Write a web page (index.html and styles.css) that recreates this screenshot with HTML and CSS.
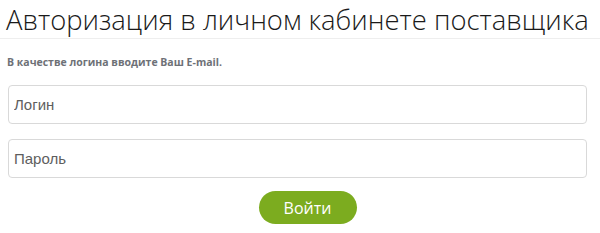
FILE: index.html
```html
<!DOCTYPE html>
<html lang="ru">
<head>
<meta charset="utf-8">
<link rel="stylesheet" href="styles.css">
</head>
<body>
<div class="page">
  <h1 class="title">Авторизация в личном кабинете поставщика</h1>
  <div class="body">
    <p class="hint">В качестве логина вводите Ваш E-mail.</p>
    <form class="form">
      <input class="field" type="text" placeholder="Логин">
      <input class="field" type="password" placeholder="Пароль">
      <div class="actions"><button class="btn" type="button">Войти</button></div>
    </form>
  </div>
</div>
</body>
</html>
```
FILE: styles.css
```css
html, body { margin: 0; padding: 0; background: #fff; }
.page { width: 600px; height: 233px; overflow: hidden; }
.title {
  margin: 0;
  padding: 5px 0 0 6px;
  height: 39px;
  box-sizing: border-box;
  font-family: "Open Sans", sans-serif;
  font-weight: 300;
  font-size: 27.4px;
  line-height: 30px;
  color: #1a1a1a;
  border-bottom: 1px solid #eeeeee;
  white-space: nowrap;
}
.body { padding: 0 13px 0 8px; }
.hint {
  margin: 16px 0 0 -1px;
  font-family: "Open Sans", sans-serif;
  font-weight: 700;
  font-size: 10.5px;
  line-height: 14px;
  color: #6e7177;
}
.form { display: flex; flex-direction: column; gap: 15px; margin-top: 16px; }
.field {
  display: block;
  box-sizing: border-box;
  width: 100%;
  height: 39px;
  margin: 0;
  padding: 0 5px;
  border: 1px solid #d9d9d9;
  border-radius: 4px;
  font-family: "Liberation Sans", Arial, sans-serif;
  font-size: 15px;
  color: #555;
  background: #fff;
  outline: none;
}
.field::placeholder { color: #5e5e5e; }
.actions { display: flex; justify-content: center; margin-top: -2px; }
.btn {
  width: 98px;
  height: 33px;
  border: none;
  border-radius: 17px;
  background: #7cac1f;
  color: #fff;
  font-family: "Open Sans", sans-serif;
  font-size: 16px;
  font-weight: 500;
  padding: 0;
  cursor: pointer;
  margin-left: 20px;
}
```
